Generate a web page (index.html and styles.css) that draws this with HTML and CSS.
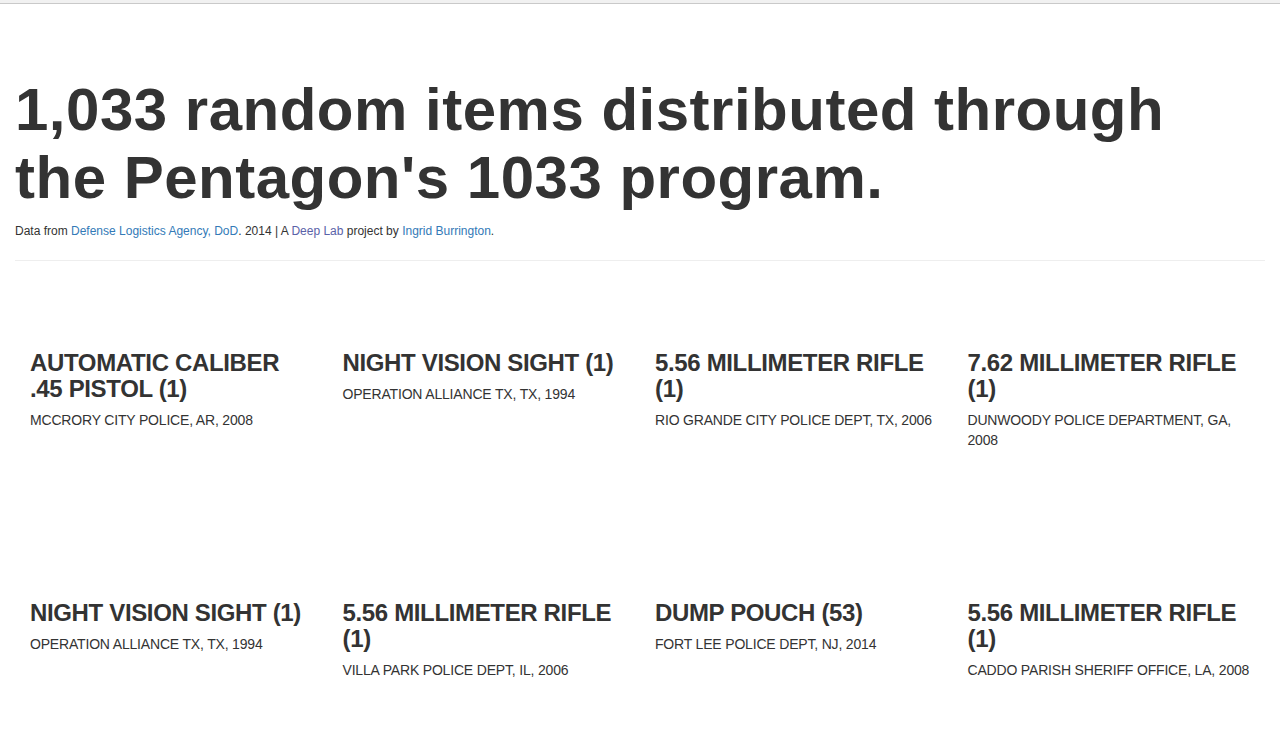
FILE: index.html
```html
<!DOCTYPE html>
<html lang="en">
<head>
<meta charset="utf-8">
<title>1,033 random items distributed through the Pentagon's 1033 program.</title>
<link rel="stylesheet" href="styles.css">
</head>
<body>
<div class="chrome"></div>
<div class="container">
  <header class="intro">
    <h1 class="headline">1,033 random items distributed through the Pentagon's 1033 program.</h1>
    <p class="credits">Data from <a class="link" href="#">Defense Logistics Agency, DoD</a>. 2014 | A <a class="link visited" href="#">Deep Lab</a> project by <a class="link" href="#">Ingrid Burrington</a>.</p>
  </header>
  <hr class="divider">
  <div class="grid">
    <div class="item">
      <h3 class="item-title">AUTOMATIC CALIBER .45 PISTOL (1)</h3>
      <p class="item-meta">MCCRORY CITY POLICE, AR, 2008</p>
    </div>
    <div class="item">
      <h3 class="item-title">NIGHT VISION SIGHT (1)</h3>
      <p class="item-meta">OPERATION ALLIANCE TX, TX, 1994</p>
    </div>
    <div class="item">
      <h3 class="item-title">5.56 MILLIMETER RIFLE (1)</h3>
      <p class="item-meta">RIO GRANDE CITY POLICE DEPT, TX, 2006</p>
    </div>
    <div class="item">
      <h3 class="item-title">7.62 MILLIMETER RIFLE (1)</h3>
      <p class="item-meta">DUNWOODY POLICE DEPARTMENT, GA, 2008</p>
    </div>
    <div class="item">
      <h3 class="item-title">NIGHT VISION SIGHT (1)</h3>
      <p class="item-meta">OPERATION ALLIANCE TX, TX, 1994</p>
    </div>
    <div class="item">
      <h3 class="item-title">5.56 MILLIMETER RIFLE (1)</h3>
      <p class="item-meta">VILLA PARK POLICE DEPT, IL, 2006</p>
    </div>
    <div class="item">
      <h3 class="item-title">DUMP POUCH (53)</h3>
      <p class="item-meta">FORT LEE POLICE DEPT, NJ, 2014</p>
    </div>
    <div class="item">
      <h3 class="item-title">5.56 MILLIMETER RIFLE (1)</h3>
      <p class="item-meta">CADDO PARISH SHERIFF OFFICE, LA, 2008</p>
    </div>
  </div>
</div>
</body>
</html>
```
FILE: styles.css
```css
html, body {
  margin: 0;
  padding: 0;
  background: #fff;
}
body {
  font-family: "Liberation Sans", Arial, sans-serif;
  color: #333;
  font-size: 14px;
  line-height: 1.42857;
}
.chrome {
  height: 3px;
  background: #f1f1f1;
  border-bottom: 1px solid #c9c9c9;
}
.container {
  padding: 0 15px;
}
.headline {
  margin: 72px 0 0;
  font-size: 60px;
  line-height: 68px;
  font-weight: bold;
  letter-spacing: 0.5px;
  color: #333;
}
.credits {
  margin: 10.5px 0 0;
  font-size: 12px;
  line-height: 17px;
}
.link {
  color: #337ab7;
  text-decoration: none;
}
.link.visited {
  color: #5a62a8;
}
.divider {
  margin: 20.5px 0 0;
  border: 0;
  border-top: 1px solid #eee;
  height: 0;
}
.grid {
  margin-top: 88.5px;
  display: grid;
  grid-template-columns: repeat(4, 1fr);
  grid-auto-rows: 250px;
}
.item {
  padding: 0 15px;
}
.item-title {
  margin: 0 0 8px;
  font-size: 24px;
  line-height: 26.4px;
  font-weight: bold;
  letter-spacing: -0.35px;
  color: #333;
}
.item-meta {
  margin: 0;
  font-size: 14px;
  line-height: 20px;
  letter-spacing: -0.18px;
}
```
